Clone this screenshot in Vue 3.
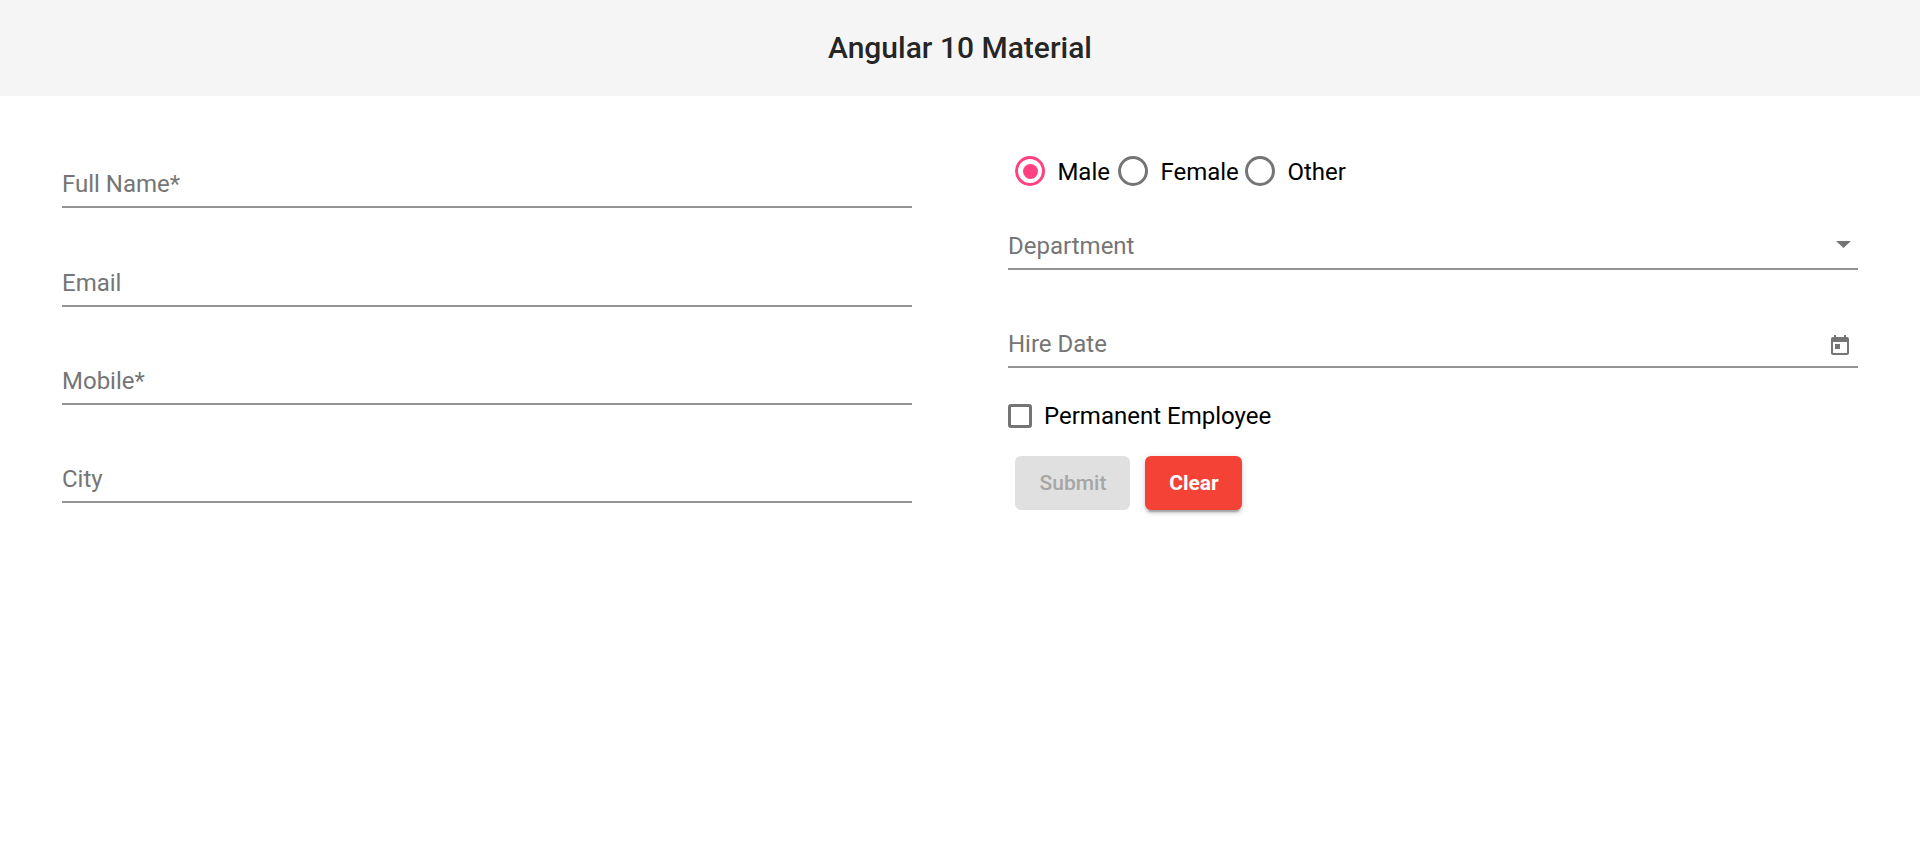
<script setup>
import { ref } from 'vue'

const textFields = ['Full Name*', 'Email', 'Mobile*', 'City']
const genders = ['Male', 'Female', 'Other']
const gender = ref('Male')
</script>

<template>
  <div class="page">
    <header class="toolbar">
      <h1 class="title">Angular 10 Material</h1>
    </header>
    <form class="form" @submit.prevent>
      <section class="column">
        <div v-for="(name, i) in textFields" :key="name" class="field" :class="{ tall: i === 1 }">
          <label class="label">{{ name }}</label>
        </div>
      </section>
      <section class="column">
        <div class="radios">
          <label v-for="g in genders" :key="g" class="radio" @click="gender = g">
            <span class="ring" :class="{ checked: gender === g }"></span>
            <span class="radio-text">{{ g }}</span>
          </label>
        </div>
        <div class="field select">
          <label class="label">Department</label>
          <svg class="arrow" width="15" height="7" viewBox="0 0 15 7"><path d="M0 0h15L7.5 7z" fill="currentColor" /></svg>
        </div>
        <div class="field">
          <label class="label">Hire Date</label>
          <svg class="calendar" width="24" height="24" viewBox="0 0 24 24"><path d="M19 3h-1V1h-2v2H8V1H6v2H5c-1.11 0-1.99.9-1.99 2L3 19c0 1.1.89 2 2 2h14c1.1 0 2-.9 2-2V5c0-1.1-.9-2-2-2zm0 16H5V8h14v11zM7 10h5v5H7z" fill="currentColor" /></svg>
        </div>
        <label class="checkbox">
          <span class="box"></span>
          <span>Permanent Employee</span>
        </label>
        <div class="buttons">
          <button class="btn submit" disabled>Submit</button>
          <button class="btn clear" type="button">Clear</button>
        </div>
      </section>
    </form>
  </div>
</template>

<style>
body {
  margin: 0;
  background: #fff;
}
</style>

<style scoped>
.page {
  min-height: 841px;
  font-family: Roboto, sans-serif;
  font-size: 24px;
  color: #000;
}
.toolbar {
  display: flex;
  align-items: center;
  justify-content: center;
  height: 96px;
  background: #f5f5f5;
}
.title {
  margin: 0;
  font-size: 30px;
  font-weight: 500;
  line-height: 36px;
  color: rgba(0, 0, 0, 0.87);
}
.form {
  display: grid;
  grid-template-columns: 850px 850px;
  column-gap: 96px;
  padding: 14px 62px 0;
}
.column {
  display: flex;
  flex-direction: column;
}
.field {
  display: flex;
  box-sizing: border-box;
  height: 98px;
  align-items: flex-end;
  justify-content: space-between;
  border-bottom: 2px solid #949494;
  color: #757575;
}
.tall {
  height: 99px;
}
.select {
  height: 84px;
}
.label {
  line-height: 28px;
  padding-bottom: 8px;
}
.radios {
  display: grid;
  grid-template-columns: 103px 127px auto;
  padding: 46px 7px 0;
}
.radio {
  display: flex;
  align-items: center;
  height: 30px;
}
.ring {
  display: flex;
  align-items: center;
  justify-content: center;
  box-sizing: border-box;
  flex: none;
  width: 30px;
  height: 30px;
  border: 3px solid #757575;
  border-radius: 50%;
}
.ring.checked {
  border-color: #ff4081;
}
.ring.checked::after {
  content: '';
  width: 15px;
  height: 15px;
  border-radius: 50%;
  background: #ff4081;
}
.radio-text {
  padding: 2px 0 0 12.4px;
  line-height: 30px;
}
.arrow {
  margin: 0 7px 20px 0;
}
.calendar {
  margin: 0 6px 8px 0;
}
.checkbox {
  display: flex;
  align-items: center;
  gap: 12px;
  margin-top: 36px;
  height: 24px;
}
.box {
  box-sizing: border-box;
  width: 24px;
  height: 24px;
  border: 3px solid #757575;
  border-radius: 3px;
}
.buttons {
  display: flex;
  gap: 15px;
  margin: 28px 0 0 7px;
}
.btn {
  height: 54px;
  padding: 0 0 0 1px;
  border: 0;
  border-radius: 6px;
  font-family: inherit;
  font-size: 21px;
  font-weight: 500;
  line-height: 54px;
}
.submit {
  width: 115px;
  background: #e0e0e0;
  color: #a6a6a6;
}
.clear {
  width: 97px;
  background: #f44336;
  color: #fff;
  font-weight: 700;
  box-shadow: 0 4.5px 1.5px -3px rgba(0, 0, 0, 0.2), 0 3px 3px 0 rgba(0, 0, 0, 0.14), 0 1.5px 7.5px 0 rgba(0, 0, 0, 0.12);
}
</style>
